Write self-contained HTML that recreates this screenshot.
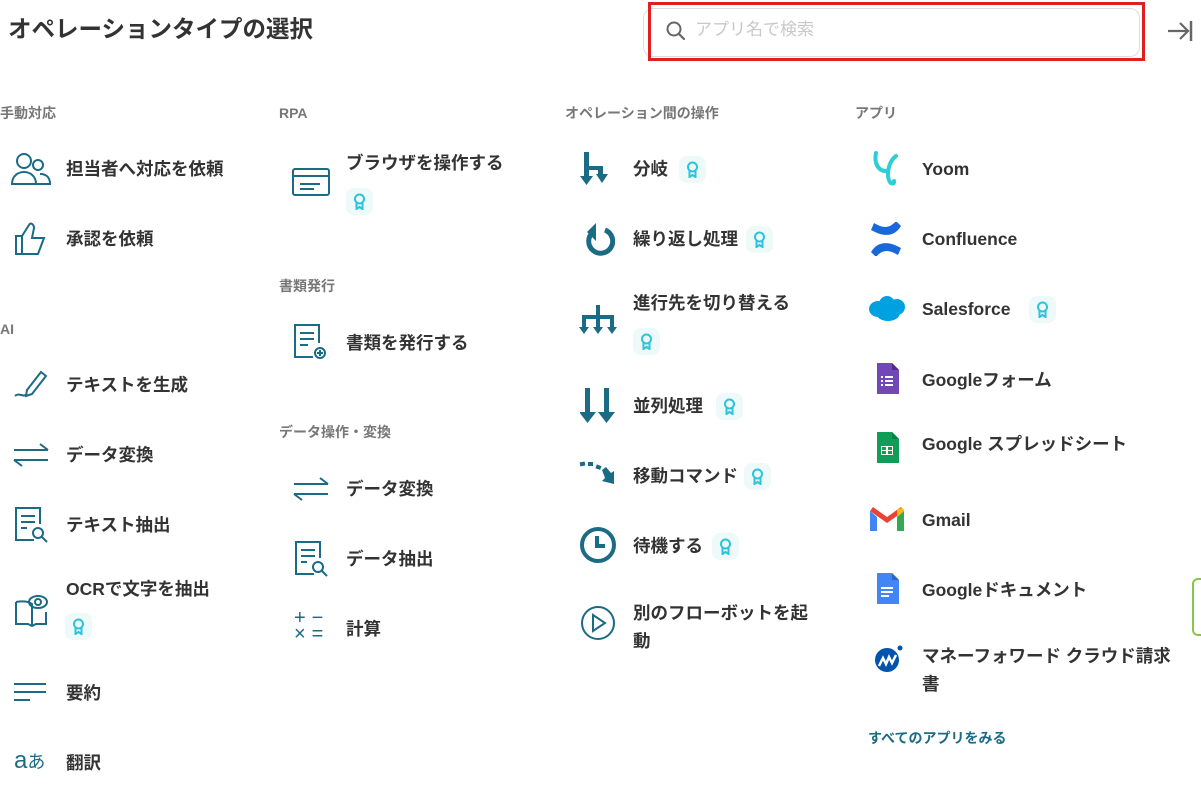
<!DOCTYPE html>
<html><head><meta charset="utf-8"><style>
*{margin:0;padding:0;box-sizing:border-box}
body{width:1201px;height:796px;background:#fff;position:relative;overflow:hidden;font-family:"Liberation Sans","Noto Sans CJK JP",sans-serif;color:#333}
.a{position:absolute;white-space:nowrap}
.t{font-size:17.5px;font-weight:bold;line-height:22px;color:#333;margin-top:1px}
.h{font-size:14px;font-weight:bold;color:#777;line-height:18px}
.b{position:absolute;width:27px;height:27px;border-radius:8px;background:#eef9fa}
.b svg{position:absolute;left:7px;top:5px}
svg.i{position:absolute}
</style></head><body>
<div class="a" style="left:8px;top:14px;font-size:23.5px;font-weight:bold;color:#333;line-height:30px">オペレーションタイプの選択</div>
<div class="a" style="left:643px;top:8px;width:497px;height:49px;border:1px solid #ddd;border-radius:10px"></div>
<div class="a" style="left:648px;top:2px;width:497px;height:59px;border:3px solid #e02020"></div>
<svg class="i" style="left:665px;top:20px" width="22" height="22" viewBox="0 0 22 22"><circle cx="9" cy="9" r="6.5" fill="none" stroke="#666" stroke-width="2"/><path d="M14 14l5 5" stroke="#666" stroke-width="2.2" stroke-linecap="round"/></svg>
<div class="a" style="left:695px;top:19px;font-size:17px;color:#c8c8c8;line-height:22px">アプリ名で検索</div>
<svg class="i" style="left:1166px;top:19px" width="28" height="24" viewBox="0 0 28 24"><path d="M2 12h20M14 4l8 8-8 8" fill="none" stroke="#666" stroke-width="2.2"/><path d="M25 2v20" stroke="#666" stroke-width="2.5"/></svg>
<div class="a" style="left:1192px;top:578px;width:20px;height:58px;border:2px solid #8bc34a;border-radius:6px"></div>

<!-- col1 -->
<div class="a h" style="left:0;top:104px">手動対応</div>
<svg class="i" style="left:10px;top:152px" width="42" height="34" viewBox="0 0 42 34" fill="none" stroke="#1b6b85" stroke-width="2"><circle cx="14" cy="9" r="7"/><path d="M2 32c0-8 6-12 12-12s12 4 12 12z"/><circle cx="28" cy="13" r="5"/><path d="M26 32h14c0-7-4-10-10-10"/></svg>
<div class="a t" style="left:66px;top:157px">担当者へ対応を依頼</div>
<svg class="i" style="left:14px;top:220px" width="34" height="36" viewBox="0 0 34 36" fill="none" stroke="#1b6b85" stroke-width="2"><path d="M2 16h6v18H2zM8 34h16l6-16h-12l2-10c0-4-4-6-5-3l-7 11"/></svg>
<div class="a t" style="left:66px;top:227px">承認を依頼</div>
<div class="a h" style="left:0;top:320px">AI</div>
<svg class="i" style="left:13px;top:366px" width="36" height="36" viewBox="0 0 36 36" fill="none" stroke="#1b6b85" stroke-width="2"><path d="M14 24l14-18 5 4-14 18-6 2zM2 30c4-4 8 2 12-2"/></svg>
<div class="a t" style="left:66px;top:373px">テキストを生成</div>
<svg class="i" style="left:12px;top:442px" width="38" height="26" viewBox="0 0 38 26" fill="none" stroke="#1b6b85" stroke-width="2"><path d="M2 8h34M28 2l8 6M36 18H2M10 24l-8-6"/></svg>
<div class="a t" style="left:66px;top:443px">データ変換</div>
<svg class="i" style="left:14px;top:506px" width="36" height="38" viewBox="0 0 36 38" fill="none" stroke="#1b6b85" stroke-width="2"><path d="M20 34H2V2h24v16M7 10h14M7 16h14M7 22h6"/><circle cx="24" cy="27" r="5"/><path d="M28 31l5 5"/></svg>
<div class="a t" style="left:66px;top:513px">テキスト抽出</div>
<svg class="i" style="left:14px;top:590px" width="36" height="38" viewBox="0 0 36 38" fill="none" stroke="#1b6b85" stroke-width="2"><path d="M2 12v22h12l4 2 4-2h10V22M18 36V14c-4-3-10-3-16-2"/><ellipse cx="24" cy="12" rx="9" ry="6"/><circle cx="24" cy="12" r="3"/></svg>
<div class="a t" style="left:66px;top:577px">OCRで文字を抽出</div>
<div class="b" style="left:65px;top:613px"><svg width="13" height="17" viewBox="0 0 13 17" fill="none" stroke="#2bc4d8" stroke-width="2"><circle cx="6.5" cy="6" r="4.5"/><path d="M3.5 10v6l3-2 3 2v-6"/></svg></div>
<svg class="i" style="left:14px;top:682px" width="34" height="22" viewBox="0 0 34 22" stroke="#1b6b85" stroke-width="2"><path d="M0 2h32M0 10h32M0 18h16"/></svg>
<div class="a t" style="left:66px;top:681px">要約</div>
<div class="a" style="left:14px;top:746px;font-size:24px;color:#1b6b85;line-height:30px">a<span style="font-size:18px">あ</span></div>
<div class="a t" style="left:66px;top:751px">翻訳</div>

<!-- col2 -->
<div class="a h" style="left:279px;top:104px">RPA</div>
<svg class="i" style="left:292px;top:168px" width="38" height="28" viewBox="0 0 38 28" fill="none" stroke="#1b6b85" stroke-width="2"><rect x="1" y="1" width="36" height="26" rx="2"/><path d="M1 8h36M8 16h20M8 21h14"/></svg>
<div class="a t" style="left:346px;top:151px">ブラウザを操作する</div>
<div class="b" style="left:346px;top:188px"><svg width="13" height="17" viewBox="0 0 13 17" fill="none" stroke="#2bc4d8" stroke-width="2"><circle cx="6.5" cy="6" r="4.5"/><path d="M3.5 10v6l3-2 3 2v-6"/></svg></div>
<div class="a h" style="left:279px;top:277px">書類発行</div>
<svg class="i" style="left:293px;top:323px" width="36" height="38" viewBox="0 0 36 38" fill="none" stroke="#1b6b85" stroke-width="2"><path d="M20 34H2V2h24v18M7 10h14M7 16h14M7 22h8"/><circle cx="27" cy="30" r="5"/><path d="M27 27v6M24 30h6"/></svg>
<div class="a t" style="left:346px;top:331px">書類を発行する</div>
<div class="a h" style="left:279px;top:423px">データ操作・変換</div>
<svg class="i" style="left:292px;top:476px" width="38" height="26" viewBox="0 0 38 26" fill="none" stroke="#1b6b85" stroke-width="2"><path d="M2 8h34M28 2l8 6M36 18H2M10 24l-8-6"/></svg>
<div class="a t" style="left:346px;top:477px">データ変換</div>
<svg class="i" style="left:294px;top:540px" width="36" height="38" viewBox="0 0 36 38" fill="none" stroke="#1b6b85" stroke-width="2"><path d="M20 34H2V2h24v16M7 10h14M7 16h14M7 22h6"/><circle cx="24" cy="27" r="5"/><path d="M28 31l5 5"/></svg>
<div class="a t" style="left:346px;top:547px">データ抽出</div>
<div class="a" style="left:294px;top:610px;font-size:20px;color:#1b6b85;line-height:16px;letter-spacing:6px">+−<br>×=</div>
<div class="a t" style="left:346px;top:617px">計算</div>

<!-- col3 -->
<div class="a h" style="left:565px;top:104px">オペレーション間の操作</div>
<svg class="i" style="left:580px;top:152px" width="34" height="34" viewBox="0 0 34 34" fill="#1b6b85"><path d="M4 0h5v14h14v8h-5v-4H9v10H4z"/><path d="M0 24h13l-6.5 9zM16 22h12l-6 9z"/></svg>
<div class="a t" style="left:633px;top:157px">分岐</div>
<div class="b" style="left:679px;top:156px"><svg width="13" height="17" viewBox="0 0 13 17" fill="none" stroke="#2bc4d8" stroke-width="2"><circle cx="6.5" cy="6" r="4.5"/><path d="M3.5 10v6l3-2 3 2v-6"/></svg></div>
<svg class="i" style="left:581px;top:222px" width="34" height="36" viewBox="0 0 34 36"><path d="M12 10A12 12 0 1 0 24 8" fill="none" stroke="#1b6b85" stroke-width="5"/><path d="M6 10l9-9v18z" fill="#1b6b85"/></svg>
<div class="a t" style="left:633px;top:227px">繰り返し処理</div>
<div class="b" style="left:746px;top:226px"><svg width="13" height="17" viewBox="0 0 13 17" fill="none" stroke="#2bc4d8" stroke-width="2"><circle cx="6.5" cy="6" r="4.5"/><path d="M3.5 10v6l3-2 3 2v-6"/></svg></div>
<svg class="i" style="left:579px;top:305px" width="38" height="34" viewBox="0 0 38 34" fill="#1b6b85"><path d="M17 0h4v10h14v12h-4v-8H21v8h-4v-8H7v8H3V10h14z"/><path d="M0 22h10l-5 7zM14 22h10l-5 7zM28 22h10l-5 7z"/></svg>
<div class="a t" style="left:633px;top:291px">進行先を切り替える</div>
<div class="b" style="left:633px;top:328px"><svg width="13" height="17" viewBox="0 0 13 17" fill="none" stroke="#2bc4d8" stroke-width="2"><circle cx="6.5" cy="6" r="4.5"/><path d="M3.5 10v6l3-2 3 2v-6"/></svg></div>
<svg class="i" style="left:580px;top:388px" width="36" height="36" viewBox="0 0 36 36" fill="#1b6b85"><path d="M5 0h5v24h6l-8.5 11L-1 24h6zM24 0h5v24h6l-8.5 11L18 24h6z"/></svg>
<div class="a t" style="left:633px;top:394px">並列処理</div>
<div class="b" style="left:716px;top:393px"><svg width="13" height="17" viewBox="0 0 13 17" fill="none" stroke="#2bc4d8" stroke-width="2"><circle cx="6.5" cy="6" r="4.5"/><path d="M3.5 10v6l3-2 3 2v-6"/></svg></div>
<svg class="i" style="left:579px;top:458px" width="38" height="34" viewBox="0 0 38 34" fill="#1b6b85"><rect x="1" y="4" width="5" height="4" transform="rotate(-10 3 6)"/><rect x="9" y="4" width="5" height="4"/><rect x="17" y="7" width="5" height="4" transform="rotate(20 19 9)"/><path d="M23 12l4-3 5 6 3-2 0 13-12-3 3-3z"/></svg>
<div class="a t" style="left:633px;top:464px">移動コマンド</div>
<div class="b" style="left:744px;top:463px"><svg width="13" height="17" viewBox="0 0 13 17" fill="none" stroke="#2bc4d8" stroke-width="2"><circle cx="6.5" cy="6" r="4.5"/><path d="M3.5 10v6l3-2 3 2v-6"/></svg></div>
<svg class="i" style="left:579px;top:526px" width="38" height="38" viewBox="0 0 38 38" fill="none" stroke="#1b6b85"><circle cx="19" cy="19" r="16" stroke-width="4"/><path d="M18 10v10h8" stroke-width="4"/></svg>
<div class="a t" style="left:633px;top:534px">待機する</div>
<div class="b" style="left:712px;top:533px"><svg width="13" height="17" viewBox="0 0 13 17" fill="none" stroke="#2bc4d8" stroke-width="2"><circle cx="6.5" cy="6" r="4.5"/><path d="M3.5 10v6l3-2 3 2v-6"/></svg></div>
<svg class="i" style="left:580px;top:605px" width="36" height="36" viewBox="0 0 36 36" fill="none" stroke="#1b6b85" stroke-width="2"><circle cx="18" cy="18" r="16"/><path d="M13 10l12 8-12 8z"/></svg>
<div class="a t" style="left:633px;top:598px;line-height:28px">別のフローボットを起<br>動</div>

<!-- col4 -->
<div class="a h" style="left:855px;top:104px">アプリ</div>
<svg class="i" style="left:872px;top:150px" width="30" height="38" viewBox="0 0 30 38" fill="none" stroke="#2ccfd5" stroke-width="4" stroke-linecap="round"><path d="M4 3c-2 10 2 18 10 18M24 6c-8 6-10 20-6 26 2 3 5 1 4-1"/></svg>
<div class="a t" style="left:922px;top:157px">Yoom</div>
<svg class="i" style="left:869px;top:222px" width="34" height="34" viewBox="0 0 34 34" fill="#1868db"><path d="M2 30c6-10 16-12 30-4l-3 7c-10-6-16-5-22 2zM32 4c-6 10-16 12-30 4l3-7c10 6 16 5 22-2z"/></svg>
<div class="a t" style="left:922px;top:227px">Confluence</div>
<svg class="i" style="left:868px;top:295px" width="38" height="28" viewBox="0 0 38 28" fill="#00a1e0"><ellipse cx="10" cy="14" rx="9" ry="8"/><ellipse cx="19" cy="9" rx="8" ry="8"/><ellipse cx="29" cy="12" rx="8" ry="8"/><ellipse cx="20" cy="18" rx="12" ry="8"/></svg>
<div class="a t" style="left:922px;top:297px">Salesforce</div>
<div class="b" style="left:1029px;top:296px"><svg width="13" height="17" viewBox="0 0 13 17" fill="none" stroke="#2bc4d8" stroke-width="2"><circle cx="6.5" cy="6" r="4.5"/><path d="M3.5 10v6l3-2 3 2v-6"/></svg></div>
<svg class="i" style="left:875px;top:363px" width="24" height="32" viewBox="0 0 24 32"><path d="M2 0h15l7 7v24H2z" fill="#7248b9"/><path d="M17 0v7h7z" fill="#4f2a90"/><g fill="#fff"><rect x="6" y="13" width="2" height="2"/><rect x="10" y="13" width="8" height="2"/><rect x="6" y="17" width="2" height="2"/><rect x="10" y="17" width="8" height="2"/><rect x="6" y="21" width="2" height="2"/><rect x="10" y="21" width="8" height="2"/></g></svg>
<div class="a t" style="left:922px;top:368px">Googleフォーム</div>
<svg class="i" style="left:875px;top:432px" width="24" height="32" viewBox="0 0 24 32"><path d="M2 0h15l7 7v24H2z" fill="#0f9d58"/><path d="M17 0v7h7z" fill="#087f44"/><path d="M6 14h12v9H6z" fill="#fff"/><path d="M7 15h4v3H7zM13 15h4v3h-4zM7 19h4v3H7zM13 19h4v3h-4z" fill="#0f9d58"/></svg>
<div class="a t" style="left:922px;top:432px">Google スプレッドシート</div>
<svg class="i" style="left:870px;top:507px" width="34" height="26" viewBox="0 0 34 26"><path d="M0 4v20h7V10z" fill="#4285f4"/><path d="M27 10v14h7V4z" fill="#34a853"/><path d="M0 4l17 12 17-12-3-4-14 10L3 0z" fill="#ea4335"/><path d="M27 3v7l7-6c0-3-3-4-7-1z" fill="#fbbc04"/></svg>
<div class="a t" style="left:922px;top:508px">Gmail</div>
<svg class="i" style="left:875px;top:573px" width="24" height="32" viewBox="0 0 24 32"><path d="M2 0h15l7 7v24H2z" fill="#4285f4"/><path d="M17 0v7h7z" fill="#2a65c8"/><g fill="#fff"><rect x="6" y="14" width="12" height="2"/><rect x="6" y="18" width="12" height="2"/><rect x="6" y="22" width="8" height="2"/></g></svg>
<div class="a t" style="left:922px;top:578px">Googleドキュメント</div>
<svg class="i" style="left:873px;top:644px" width="30" height="30" viewBox="0 0 30 30"><circle cx="14" cy="16" r="12" fill="#0054ac"/><path d="M6 22l4-8 3 6 3-7 3 6 4-8" fill="none" stroke="#fff" stroke-width="2.5"/><circle cx="27" cy="4" r="2.5" fill="#0054ac"/></svg>
<div class="a t" style="left:922px;top:641px;line-height:28px">マネーフォワード クラウド請求<br>書</div>
<div class="a" style="left:868px;top:728px;font-size:14px;font-weight:bold;color:#1b6b85;line-height:20px">すべてのアプリをみる</div>
</body></html>
